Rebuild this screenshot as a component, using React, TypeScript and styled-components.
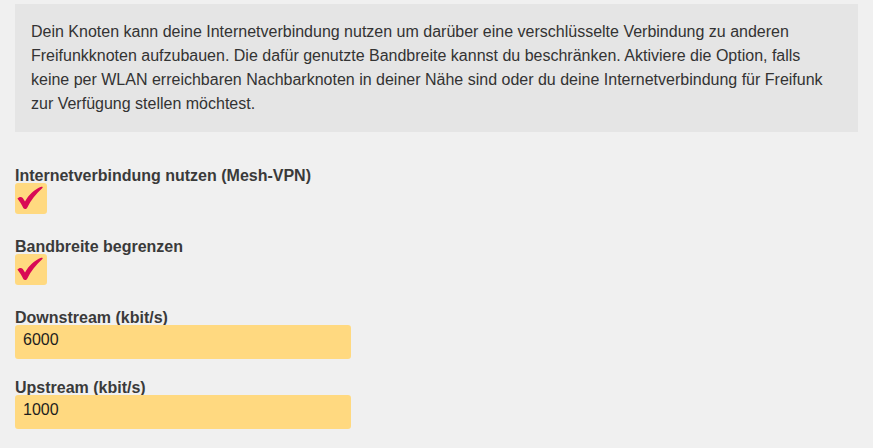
import React from "react";
import styled, { createGlobalStyle } from "styled-components";

const GlobalStyle = createGlobalStyle`
  html, body {
    margin: 0;
    padding: 0;
    background: #f0f0f0;
  }
  body {
    font-family: "Liberation Sans", Arial, Helvetica, sans-serif;
    color: #333;
  }
`;

const Page = styled.div`
  padding: 4px 15px 0 15px;
  width: 873px;
  height: 448px;
  box-sizing: border-box;
`;

const InfoBox = styled.div`
  background: #e5e5e5;
  padding: 16px;
  font-size: 16px;
  line-height: 24px;
  color: #333;
`;

const Form = styled.div`
  display: flex;
  flex-direction: column;
  margin-top: 15px;
`;

const Field = styled.div<{ $gapAfter?: number }>`
  display: flex;
  flex-direction: column;
  align-items: flex-start;
  margin-top: 21px;
  margin-bottom: ${(p) => p.$gapAfter ?? 0}px;
`;

const Label = styled.label`
  font-size: 16px;
  font-weight: bold;
  line-height: 15px;
  color: #3a3a3a;
`;

const CheckBox = styled.span`
  display: flex;
  width: 32px;
  height: 31px;
  border-radius: 3px;
  background: #ffd980;
  svg {
    display: block;
  }
`;

const TextInput = styled.input`
  box-sizing: border-box;
  width: 336px;
  height: 34px;
  margin: 0;
  border: none;
  border-radius: 3px;
  background: #ffd980;
  padding: 0 8px 4px 8px;
  font-family: "Liberation Sans", Arial, Helvetica, sans-serif;
  font-size: 16px;
  color: #1e1e1e;
  outline: none;
`;

const Check = () => (
  <CheckBox>
    <svg width="32" height="31" viewBox="0 0 32 31">
      <path
        d="M2.4 15.6 C3.8 13.9 6.4 13.5 7.8 15 L10 18.6 C14 11.4 19.4 6.4 26.2 3.8 C27.4 3.3 28.2 4.2 27.4 5 C21 10.6 15.8 17.2 12.2 24.8 C11.5 26.3 9.1 26.5 8.3 25 C6.8 21.6 4.6 18.4 2.4 15.6 Z"
        fill="#d90a55"
      />
    </svg>
  </CheckBox>
);

export default function App() {
  return (
    <>
      <GlobalStyle />
      <Page>
        <InfoBox>
          Dein Knoten kann deine Internetverbindung nutzen um darüber eine
          verschlüsselte Verbindung zu anderen Freifunkknoten aufzubauen. Die
          dafür genutzte Bandbreite kannst du beschränken. Aktiviere die
          Option, falls keine per WLAN erreichbaren Nachbarknoten in deiner
          Nähe sind oder du deine Internetverbindung für Freifunk zur Verfügung
          stellen möchtest.
        </InfoBox>
        <Form>
          <Field $gapAfter={4}>
            <Label>Internetverbindung nutzen (Mesh-VPN)</Label>
            <Check />
          </Field>
          <Field $gapAfter={4}>
            <Label>Bandbreite begrenzen</Label>
            <Check />
          </Field>
          <Field>
            <Label>Downstream (kbit/s)</Label>
            <TextInput defaultValue="6000" />
          </Field>
          <Field>
            <Label>Upstream (kbit/s)</Label>
            <TextInput defaultValue="1000" />
          </Field>
        </Form>
      </Page>
    </>
  );
}
